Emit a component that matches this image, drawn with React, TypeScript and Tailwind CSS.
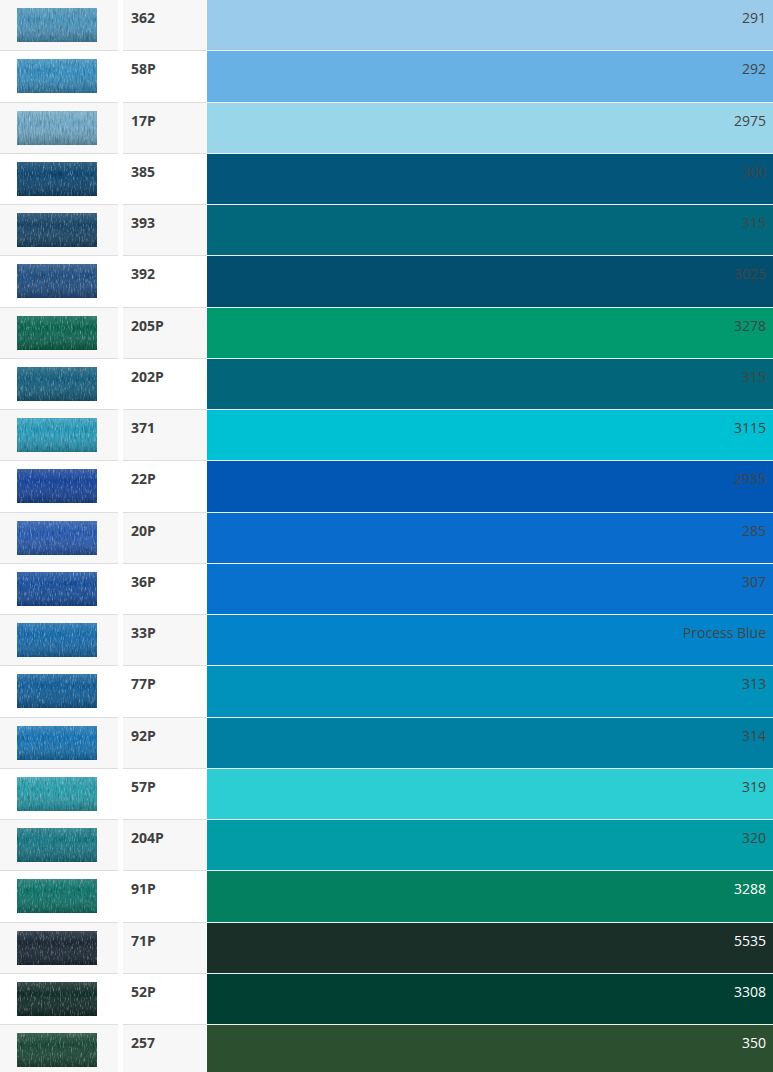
import React from 'react';

type Thread = {
  code: string;
  thumb: string;
  swatch: string;
  pantone: string;
  light?: boolean;
};

const threads: Thread[] = [
  { code: '362', thumb: '#4c96bd', swatch: '#9bcbeb', pantone: '291' },
  { code: '58P', thumb: '#3890c2', swatch: '#67b1e5', pantone: '292' },
  { code: '17P', thumb: '#70aac8', swatch: '#99d6ea', pantone: '2975' },
  { code: '385', thumb: '#114a74', swatch: '#04557a', pantone: '300' },
  { code: '393', thumb: '#1a486a', swatch: '#02677a', pantone: '315' },
  { code: '392', thumb: '#245285', swatch: '#034e6f', pantone: '3025' },
  { code: '205P', thumb: '#0c6852', swatch: '#009a6e', pantone: '3278' },
  { code: '202P', thumb: '#196383', swatch: '#03657a', pantone: '315' },
  { code: '371', thumb: '#2a9ebe', swatch: '#00c1d4', pantone: '3115' },
  { code: '22P', thumb: '#1a48a0', swatch: '#0257b5', pantone: '2935' },
  { code: '20P', thumb: '#2a5cb2', swatch: '#096ccd', pantone: '285' },
  { code: '36P', thumb: '#1b52a0', swatch: '#0871ce', pantone: '307' },
  { code: '33P', thumb: '#196eb0', swatch: '#0384ca', pantone: 'Process Blue' },
  { code: '77P', thumb: '#14629e', swatch: '#0192bc', pantone: '313' },
  { code: '92P', thumb: '#1876b8', swatch: '#017fa3', pantone: '314' },
  { code: '57P', thumb: '#2a9fae', swatch: '#2ccdd3', pantone: '319' },
  { code: '204P', thumb: '#1a7a88', swatch: '#019ca6', pantone: '320' },
  { code: '91P', thumb: '#11776c', swatch: '#02805f', pantone: '3288', light: true },
  { code: '71P', thumb: '#1d2b38', swatch: '#1b2f29', pantone: '5535', light: true },
  { code: '52P', thumb: '#142f2a', swatch: '#013f33', pantone: '3308', light: true },
  { code: '257', thumb: '#1d4a38', swatch: '#2c4f30', pantone: '350', light: true },
];

// woven thread sample: base colour plus fine vertical speckle
const ThreadThumb = ({ color, seed }: { color: string; seed: number }) => (
  <svg width="80" height="34" viewBox="0 0 80 34" className="block">
    <defs>
      <filter id={`spark-${seed}`} x="0" y="0" width="100%" height="100%">
        <feTurbulence type="fractalNoise" baseFrequency="1.1 0.2" numOctaves="3" seed={seed} />
        <feColorMatrix type="matrix" values="0 0 0 0 1  0 0 0 0 1  0 0 0 0 1  0 0 0 2.4 -1.25" />
      </filter>
      <filter id={`shade-${seed}`} x="0" y="0" width="100%" height="100%">
        <feTurbulence type="fractalNoise" baseFrequency="0.8 0.12" numOctaves="2" seed={seed + 40} />
        <feColorMatrix type="matrix" values="0 0 0 0 0  0 0 0 0 0  0 0 0 0 0  0 0 0 1.8 -0.8" />
      </filter>
      <linearGradient id={`g-${seed}`} x1="0" y1="0" x2="0" y2="1">
        <stop offset="0" stopColor="#fff" stopOpacity="0.15" />
        <stop offset="0.35" stopColor="#fff" stopOpacity="0" />
        <stop offset="1" stopColor="#000" stopOpacity="0.25" />
      </linearGradient>
    </defs>
    <rect width="80" height="34" fill={color} />
    <rect width="80" height="34" filter={`url(#shade-${seed})`} opacity="0.35" />
    <rect width="80" height="34" filter={`url(#spark-${seed})`} opacity="0.4" />
    <rect width="80" height="34" fill={`url(#g-${seed})`} />
  </svg>
);

export default function App() {
  return (
    <div className="w-[773px] bg-white font-['Open_Sans',_'Liberation_Sans',_sans-serif] text-sm">
      {threads.map((t, i) => {
        const shaded = i % 2 === 0;
        return (
          <div key={i} className="flex h-[51.25px]">
            <div
              className={`w-[118px] shrink-0 border-b border-[#dddddd] pl-[17px] pt-2 ${
                shaded ? 'bg-[#f7f7f7]' : 'bg-white'
              }`}
            >
              <ThreadThumb color={t.thumb} seed={i + 1} />
            </div>
            <div
              className={`ml-[5px] w-[83px] shrink-0 border-b border-[#dddddd] px-2 pt-2 font-bold leading-[19px] text-[#404040] ${
                shaded ? 'bg-[#f7f7f7]' : 'bg-white'
              }`}
            >
              {t.code}
            </div>
            <div
              className={`ml-px flex-1 border-b border-[#e8f4f8] pr-[7px] pt-2 text-right leading-[19px] ${
                t.light ? 'text-white' : 'text-[#444444]'
              }`}
              style={{ backgroundColor: t.swatch }}
            >
              {t.pantone}
            </div>
          </div>
        );
      })}
    </div>
  );
}
